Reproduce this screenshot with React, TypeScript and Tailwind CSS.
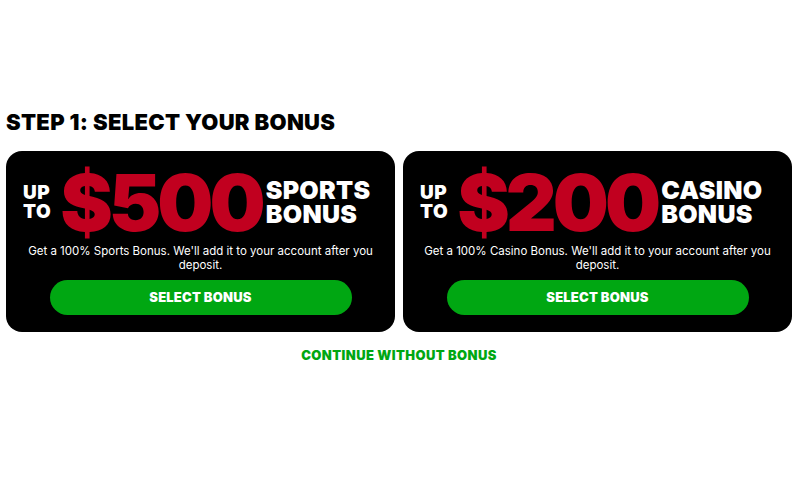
const offers = [
  { amount: '$500', kind: 'SPORTS', label: 'Sports' },
  { amount: '$200', kind: 'CASINO', label: 'Casino' },
];

function BonusCard({ amount, kind, label }: { amount: string; kind: string; label: string }) {
  return (
    <div className="w-[389px] bg-black rounded-[16px] px-[17px] pt-[13px] pb-[17px] flex flex-col items-center">
      <div className="flex items-center w-full">
        <div className="flex flex-col text-white font-black text-[19px] leading-[19px] tracking-[0.5px]">
          <span>UP</span>
          <span>TO</span>
        </div>
        <span className="text-[#c1001f] font-black text-[79px] leading-[76px] tracking-[-4px] ml-[9px]">{amount}</span>
        <div className="flex flex-col text-white font-black text-[25px] leading-[24px] ml-[4px] tracking-[0.3px]">
          <span>{kind}</span>
          <span>BONUS</span>
        </div>
      </div>
      <p className="text-white text-[11.5px] leading-[14px] text-center mt-[4px] w-[355px]">
        Get a 100% {label} Bonus. We'll add it to your account after you deposit.
      </p>
      <button className="mt-[8px] w-[302px] h-[35px] rounded-full bg-[#00a712] text-white font-black text-[13px] tracking-[0.2px]">
        SELECT BONUS
      </button>
    </div>
  );
}

export default function App() {
  return (
    <div className="w-[800px] h-[500px] bg-white pt-[108px] pl-[6px]" style={{ fontFamily: 'Inter, "Liberation Sans", sans-serif' }}>
      <h1 className="text-black font-black text-[22px] leading-[28px] tracking-[0.3px]">STEP 1: SELECT YOUR BONUS</h1>
      <div className="flex gap-[8px] mt-[15px]">
        {offers.map((o) => (
          <BonusCard key={o.kind} {...o} />
        ))}
      </div>
      <div className="flex justify-center mt-[14px] w-[786px]">
        <button className="text-[#00a712] font-black text-[13px] tracking-[0.4px]">CONTINUE WITHOUT BONUS</button>
      </div>
    </div>
  );
}
